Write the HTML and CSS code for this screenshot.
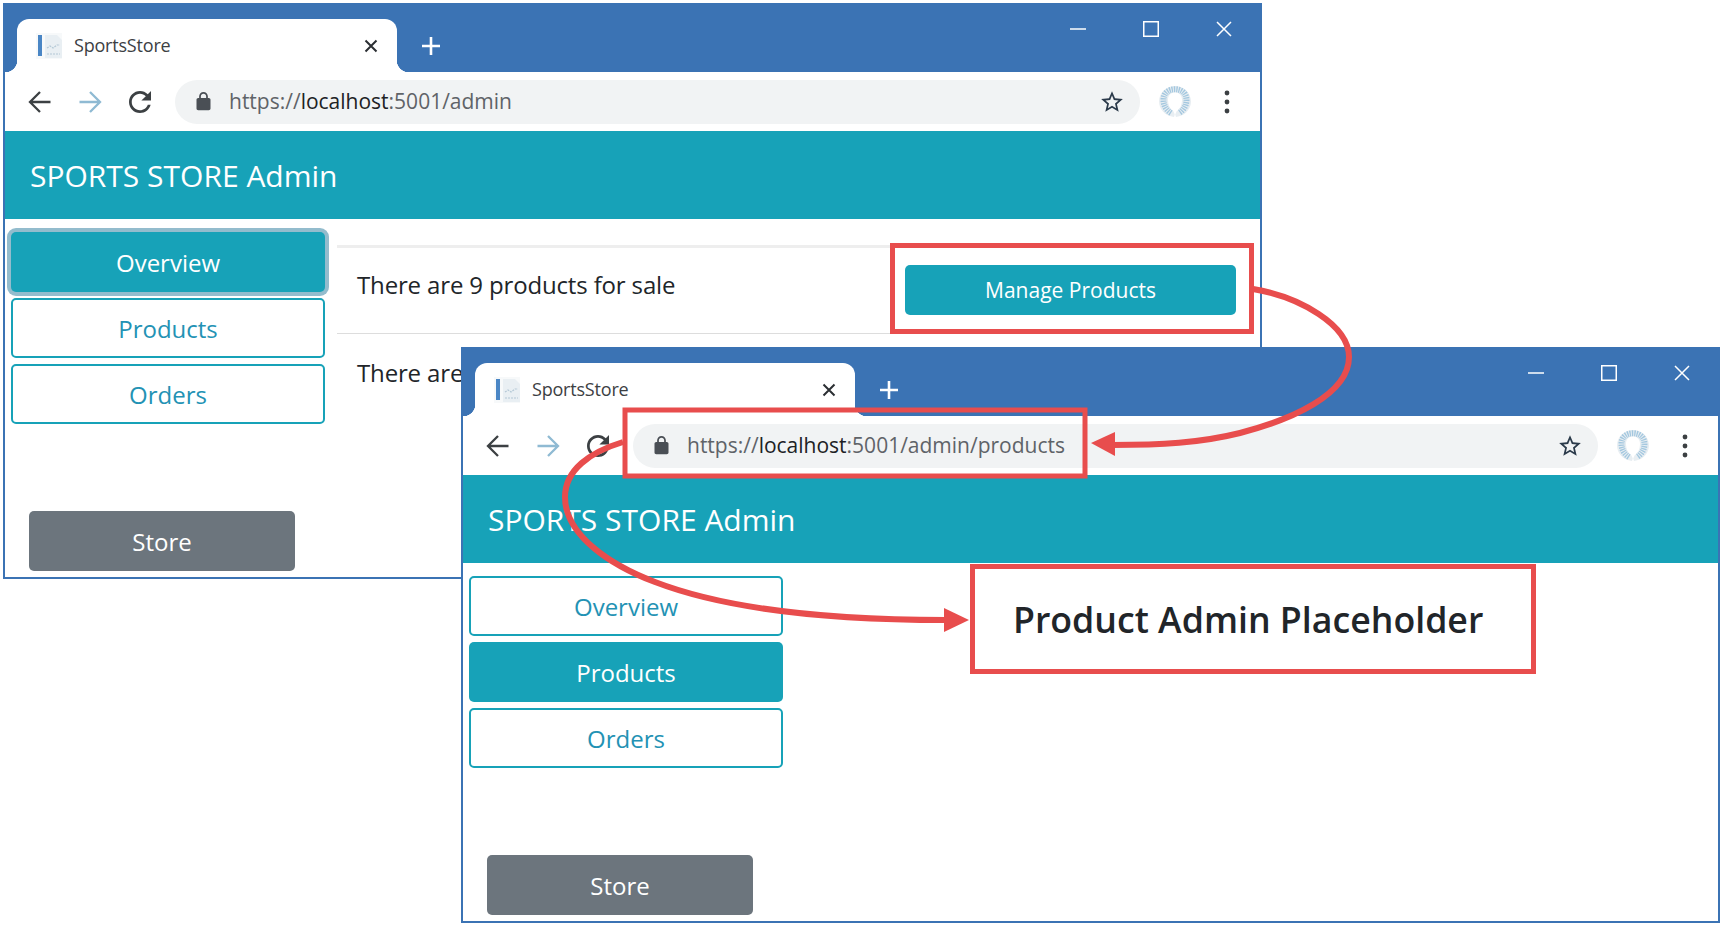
FILE: index.html
```html
<!DOCTYPE html>
<html lang="en">
<head>
  <meta charset="UTF-8">
  <meta name="viewport" content="width=device-width, initial-scale=1.0">
  <title>SportsStore</title>
  <link rel="stylesheet" href="styles.css">
</head>
<body>
  <svg class="sprite" width="0" height="0">
    <symbol id="i-favicon" viewBox="0 0 26 26">
      <rect x="0" y="0" width="26" height="26" fill="#f7f9fa"/>
      <rect x="2" y="2" width="4" height="21" fill="#4a86c5"/>
      <path d="M9 2h12l5 5v18H9z" fill="#e9eff3"/>
      <path d="M11 15l3-2 3 2 4-3 3 0M11 21h13" fill="none" stroke="#b4c8d6" stroke-width="1.2" stroke-dasharray="2 1"/>
    </symbol>
    <symbol id="i-back" viewBox="-3 -3 30 30"><path d="M22.5 12H2M12 2L2 12l10 10" fill="none" stroke="currentColor" stroke-width="2.3"/></symbol>
    <symbol id="i-forward" viewBox="-3 -3 30 30"><path d="M1.5 12H22M12 2l10 10-10 10" fill="none" stroke="currentColor" stroke-width="2.3"/></symbol>
    <symbol id="i-reload" viewBox="1.1 1.1 21.8 21.8"><path d="M17.65 6.35C16.2 4.9 14.21 4 12 4c-4.42 0-7.99 3.58-7.99 8s3.57 8 7.99 8c3.73 0 6.84-2.55 7.73-6h-2.08c-.82 2.33-3.04 4-5.65 4-3.31 0-6-2.69-6-6s2.69-6 6-6c1.66 0 3.14.69 4.22 1.78L13 11h7V4l-2.35 2.35z"/></symbol>
    <symbol id="i-lock" viewBox="0 0 24 24"><path d="M18 8h-1V6c0-2.76-2.24-5-5-5S7 3.24 7 6v2H6c-1.1 0-2 .9-2 2v10c0 1.1.9 2 2 2h12c1.1 0 2-.9 2-2V10c0-1.1-.9-2-2-2zm-6-5c1.66 0 3 1.34 3 3v2H9V6c0-1.66 1.34-3 3-3z"/></symbol>
    <symbol id="i-star" viewBox="0 0 24 24"><path d="M22 9.24l-7.19-.62L12 2 9.19 8.63 2 9.24l5.46 4.73L5.82 21 12 17.27 18.18 21l-1.63-7.03L22 9.24zM12 15.4l-3.76 2.27 1-4.28-3.32-2.88 4.38-.38L12 6.1l1.71 4.04 4.38.38-3.32 2.88 1 4.28L12 15.4z"/></symbol>
    <symbol id="i-avatar" viewBox="0 0 32 31">
      <path d="M15 31C6 30 0 23 0 15.5 0 7 7 0 16 0s16 7 16 15.5c0 7.5-6 14.5-15 15.5l-1-3-1 3z" fill="#e8eef2"/>
      <path d="M9 14c0-5 3-7.5 7-7.5s7 2.5 7 7.5c0 5-2 9-5.5 11.5L16 29l-1.5-3.500C11 23 9 19 9 14z" fill="white"/>
      <path d="M12 27C7 24 4.5 19 4.5 14 4.5 7 9.5 3.3 16 3.3S27.5 7 27.5 14c0 5-2.500 10-7.500 13" fill="none" stroke="#a3c7df" stroke-width="6" stroke-dasharray="1.3 1"/>
    </symbol>
    <symbol id="i-dots" viewBox="0 0 6 24">
      <circle cx="3" cy="3" r="2.4"/><circle cx="3" cy="12" r="2.4"/><circle cx="3" cy="21" r="2.4"/>
    </symbol>
    <symbol id="i-close" viewBox="0 0 16 16"><path d="M1 1l14 14M15 1L1 15" fill="none" stroke="currentColor" stroke-width="1.5"/></symbol>
    <symbol id="i-tabclose" viewBox="0 0 14 14"><path d="M1.5 1.5l11 11M12.5 1.5l-11 11" fill="none" stroke="currentColor" stroke-width="2"/></symbol>
    <symbol id="i-plus" viewBox="0 0 20 20"><path d="M10 1v18M1 10h18" fill="none" stroke="currentColor" stroke-width="2.6"/></symbol>
    <symbol id="i-min" viewBox="0 0 16 16"><path d="M0 8h16" fill="none" stroke="currentColor" stroke-width="1.5"/></symbol>
    <symbol id="i-max" viewBox="0 0 16 16"><rect x=".75" y=".75" width="14.5" height="14.5" fill="none" stroke="currentColor" stroke-width="1.5"/></symbol>
  </svg>

  <div class="window window-first">
    <div class="titlebar">
      <div class="tab">
        <svg class="favicon"><use href="#i-favicon"/></svg>
        <span class="tab-title">SportsStore</span>
        <svg class="tab-close"><use href="#i-tabclose"/></svg>
      </div>
      <svg class="new-tab"><use href="#i-plus"/></svg>
      <div class="controls">
        <span class="control"><svg><use href="#i-min"/></svg></span>
        <span class="control"><svg><use href="#i-max"/></svg></span>
        <span class="control"><svg><use href="#i-close"/></svg></span>
      </div>
    </div>
    <div class="toolbar">
      <svg class="nav-icon"><use href="#i-back"/></svg>
      <svg class="nav-icon nav-off"><use href="#i-forward"/></svg>
      <svg class="nav-icon"><use href="#i-reload"/></svg>
      <div class="omnibox">
        <svg class="lock"><use href="#i-lock"/></svg>
        <span class="url">https://<b>localhost</b>:5001/admin</span>
        <svg class="star"><use href="#i-star"/></svg>
      </div>
      <svg class="avatar"><use href="#i-avatar"/></svg>
      <svg class="dots"><use href="#i-dots"/></svg>
    </div>
    <div class="app-header">SPORTS STORE Admin</div>
    <div class="app-body">
      <div class="sidebar">
        <a class="btn btn-on btn-focus">Overview</a>
        <a class="btn btn-off">Products</a>
        <a class="btn btn-off">Orders</a>
        <a class="btn btn-store">Store</a>
      </div>
      <div class="content content-first">
        <div class="stat-row">
          <div class="stat-text">There are 9 products for sale</div>
          <div class="callout callout-button"><a class="btn btn-on btn-manage">Manage Products</a></div>
        </div>
        <div class="stat-next">There are</div>
      </div>
    </div>
  </div>

  <div class="window window-second">
    <div class="titlebar">
      <div class="tab">
        <svg class="favicon"><use href="#i-favicon"/></svg>
        <span class="tab-title">SportsStore</span>
        <svg class="tab-close"><use href="#i-tabclose"/></svg>
      </div>
      <svg class="new-tab"><use href="#i-plus"/></svg>
      <div class="controls">
        <span class="control"><svg><use href="#i-min"/></svg></span>
        <span class="control"><svg><use href="#i-max"/></svg></span>
        <span class="control"><svg><use href="#i-close"/></svg></span>
      </div>
    </div>
    <div class="toolbar">
      <svg class="nav-icon"><use href="#i-back"/></svg>
      <svg class="nav-icon nav-off"><use href="#i-forward"/></svg>
      <svg class="nav-icon"><use href="#i-reload"/></svg>
      <div class="omnibox">
        <svg class="lock"><use href="#i-lock"/></svg>
        <span class="url">https://<b>localhost</b>:5001/admin/products</span>
        <svg class="star"><use href="#i-star"/></svg>
      </div>
      <svg class="avatar"><use href="#i-avatar"/></svg>
      <svg class="dots"><use href="#i-dots"/></svg>
    </div>
    <div class="app-header">SPORTS STORE Admin</div>
    <div class="app-body">
      <div class="sidebar">
        <a class="btn btn-off">Overview</a>
        <a class="btn btn-on">Products</a>
        <a class="btn btn-off">Orders</a>
        <a class="btn btn-store">Store</a>
      </div>
      <div class="content content-second">
        <div class="callout callout-heading"><h3>Product Admin Placeholder</h3></div>
      </div>
    </div>
  </div>

  <!-- red annotations sit over both windows -->
  <svg class="notes" viewBox="0 0 1725 929">
    <rect class="note-box" x="625" y="410" width="460" height="66"/>
    <path class="note-line" d="M1253 289C1300 297 1349 325 1349 357 1349 395 1290 420 1240 433 1200 443 1160 445 1112 445"/>
    <polygon class="note-head" points="1091,443 1115,432 1115,456"/>
    <path class="note-line" d="M623 442C590 452 565 470 565 497 565 535 610 565 655 582 720 607 820 620 946 620"/>
    <polygon class="note-head" points="969,620 944,608 944,632"/>
  </svg>
</body>
</html>
```

FILE: styles.css
```css
* { box-sizing: border-box; }
html, body { margin: 0; height: 100%; }
body { position: relative; overflow: hidden; background: white; font-family: "Open Sans", "Noto Sans", sans-serif; color: #212529; }
.sprite { position: absolute; }

.window { position: absolute; width: 1259px; height: 576px; background: white; border: 2px solid #3b73b4; border-top: none; display: flex; flex-direction: column; }
.window-first { left: 3px; top: 3px; z-index: 1; }
.window-second { left: 461px; top: 347px; z-index: 2; }

.titlebar { height: 69px; flex: none; background: #3b73b4; display: flex; align-items: flex-start; color: white; }
.tab { position: relative; width: 380px; height: 53px; margin: 16px 0 0 12px; padding: 0 19px 0 19px; background: white; border-radius: 12px 12px 0 0; display: flex; align-items: center; color: #3c4043; }
.tab::before, .tab::after { content: ""; position: absolute; bottom: 0; width: 12px; height: 12px; }
.tab::before { left: -12px; background: radial-gradient(circle at 0 0, transparent 12px, white 12.5px); }
.tab::after { right: -12px; background: radial-gradient(circle at 100% 0, transparent 12px, white 12.5px); }
.favicon { width: 26px; height: 26px; flex: none; }
.tab-title { margin: -2px 0 0 12px; font-size: 18px; letter-spacing: -.2px; white-space: nowrap; }
.tab-close { width: 14px; height: 14px; margin-left: auto; color: #2b2f33; }
.new-tab { width: 20px; height: 20px; margin: 33px 0 0 24px; color: white; }
.controls { margin-left: auto; display: flex; }
.control { width: 73px; height: 51px; display: flex; align-items: center; justify-content: center; }
.control svg { width: 16px; height: 16px; }

.toolbar { height: 59px; flex: none; display: flex; align-items: center; padding-left: 17px; background: white; }
.nav-icon { width: 30px; height: 30px; margin: 0 17px 0 3px; flex: none; fill: #3c4043; color: #3c4043; }
.nav-off { color: #8fbad3; }
.omnibox { width: 965px; height: 44px; margin-left: 3px; border-radius: 22px; background: #f1f3f4; display: flex; align-items: center; padding: 0 15px 0 18px; flex: none; }
.lock { width: 21px; height: 21px; fill: #4a4f55; flex: none; }
.url { margin: -2px 0 0 15px; font-size: 21px; color: #5f6368; white-space: nowrap; }
.url b { font-weight: normal; color: #202124; }
.star { width: 26px; height: 26px; margin-left: auto; fill: #2b3a4a; flex: none; }
.avatar { width: 32px; height: 31px; margin-left: 19px; flex: none; }
.dots { width: 6px; height: 24px; margin-left: 33px; fill: #3c4043; flex: none; }

.app-header { height: 88px; flex: none; background: #17a2b8; color: white; font-size: 30px; display: flex; align-items: center; padding-left: 25px; }
.app-body { flex: 1; display: flex; min-height: 0; }

.sidebar { width: 332px; flex: none; display: flex; flex-direction: column; gap: 6px; padding: 13px 0 6px 6px; }
.btn { display: flex; align-items: center; justify-content: center; width: 314px; height: 60px; border-radius: 5px; font-size: 24px; }
.btn-on { background: #17a2b8; color: white; }
.btn-off { background: white; border: 2px solid #17a2b8; color: #2392b4; }
.btn-focus { box-shadow: 0 0 0 4px #93bccd; }
.btn-store { width: 266px; margin: auto 0 0 18px; background: #6c757d; color: white; }

.content { flex: 1; min-width: 0; }
.content-first { padding: 24px 6px 0 0; }
.content-second { padding-top: 1px; }
.stat-row { display: flex; height: 91px; }
.stat-text { flex: 1; margin-top: 2px; padding: 19px 0 0 20px; border-top: 3px solid #eee; border-bottom: 1px solid #ddd; font-size: 24px; line-height: 36px; letter-spacing: -.15px; }
.stat-next { padding: 21px 0 0 20px; font-size: 24px; line-height: 36px; letter-spacing: -.15px; }

.callout { border: 5px solid #e84d4d; background: white; }
.callout-button { width: 364px; padding: 17px 0 0 10px; }
.btn-manage { width: 331px; height: 50px; font-size: 21px; }
.callout-heading { width: 566px; height: 110px; margin-left: 175px; padding-left: 38px; display: flex; align-items: center; }
.callout-heading h3 { margin: -1px 0 0; font-size: 35.7px; font-weight: 600; white-space: nowrap; }

.notes { position: absolute; left: 0; top: 0; width: 1725px; height: 929px; z-index: 3; pointer-events: none; }
.note-box { fill: none; stroke: #e84d4d; stroke-width: 5; }
.note-line { fill: none; stroke: #e84d4d; stroke-width: 6; }
.note-head { fill: #e84d4d; }
```
